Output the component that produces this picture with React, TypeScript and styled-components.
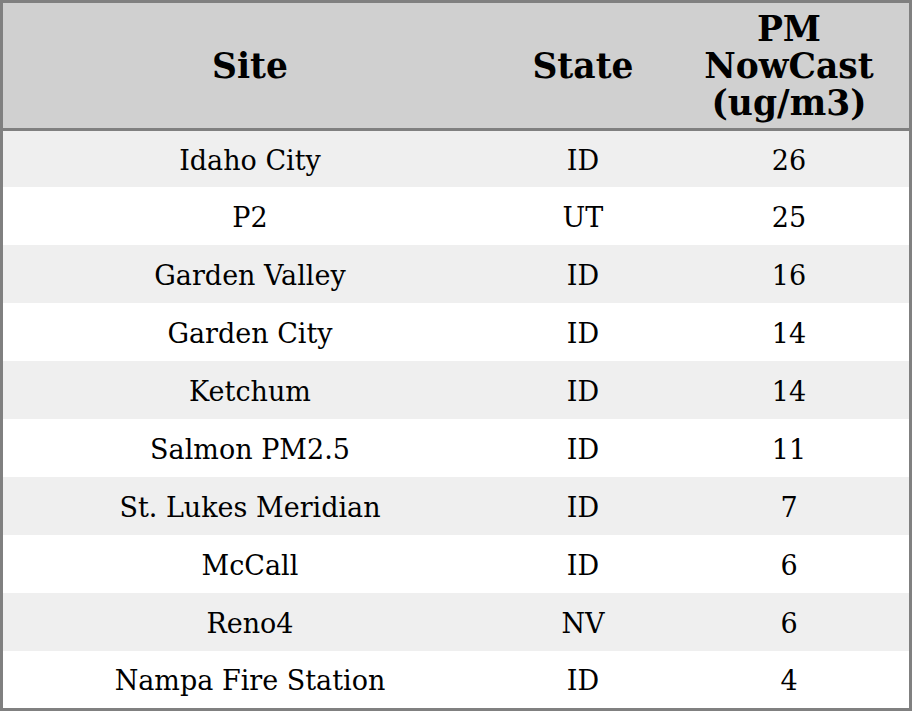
import React from "react";
import styled, { createGlobalStyle } from "styled-components";

interface SiteRow {
  site: string;
  state: string;
  pm: number;
}

const rows: SiteRow[] = [
  { site: "Idaho City", state: "ID", pm: 26 },
  { site: "P2", state: "UT", pm: 25 },
  { site: "Garden Valley", state: "ID", pm: 16 },
  { site: "Garden City", state: "ID", pm: 14 },
  { site: "Ketchum", state: "ID", pm: 14 },
  { site: "Salmon PM2.5", state: "ID", pm: 11 },
  { site: "St. Lukes Meridian", state: "ID", pm: 7 },
  { site: "McCall", state: "ID", pm: 6 },
  { site: "Reno4", state: "NV", pm: 6 },
  { site: "Nampa Fire Station", state: "ID", pm: 4 },
];

const GlobalStyle = createGlobalStyle`
  html, body {
    margin: 0;
    padding: 0;
    background: #ffffff;
  }
  body {
    font-family: "DejaVu Serif", "Liberation Serif", serif;
    color: #000000;
  }
`;

const Table = styled.div`
  width: 912px;
  height: 711px;
  box-sizing: border-box;
  border: 3px solid #808080;
  display: flex;
  flex-direction: column;
`;

const Header = styled.div`
  display: grid;
  grid-template-columns: 494px 172px 240px;
  height: 125px;
  flex: none;
  background: #d0d0d0;
  border-bottom: 3px solid #808080;
`;

const HeadCell = styled.div`
  display: flex;
  align-items: center;
  justify-content: center;
  text-align: center;
  padding-top: 2px;
  font-weight: bold;
  font-size: 34.5px;
  line-height: 37px;
`;

const Body = styled.div`
  flex: 1;
  display: grid;
  grid-template-rows: 56px repeat(8, 58px) 1fr;
`;

const Row = styled.div<{ $striped: boolean }>`
  display: grid;
  grid-template-columns: 494px 172px 240px;
  background: ${({ $striped }) => ($striped ? "#efefef" : "#ffffff")};
`;

const Cell = styled.div`
  display: flex;
  align-items: center;
  justify-content: center;
  padding-top: 2px;
  font-size: 27px;
`;

export default function App() {
  return (
    <>
      <GlobalStyle />
      <Table>
        <Header>
          <HeadCell>Site</HeadCell>
          <HeadCell>State</HeadCell>
          <HeadCell>
            PM
            <br />
            NowCast
            <br />
            (ug/m3)
          </HeadCell>
        </Header>
        <Body>
          {rows.map((r, i) => (
            <Row key={i} $striped={i % 2 === 0}>
              <Cell>{r.site}</Cell>
              <Cell>{r.state}</Cell>
              <Cell>{r.pm}</Cell>
            </Row>
          ))}
        </Body>
      </Table>
    </>
  );
}
